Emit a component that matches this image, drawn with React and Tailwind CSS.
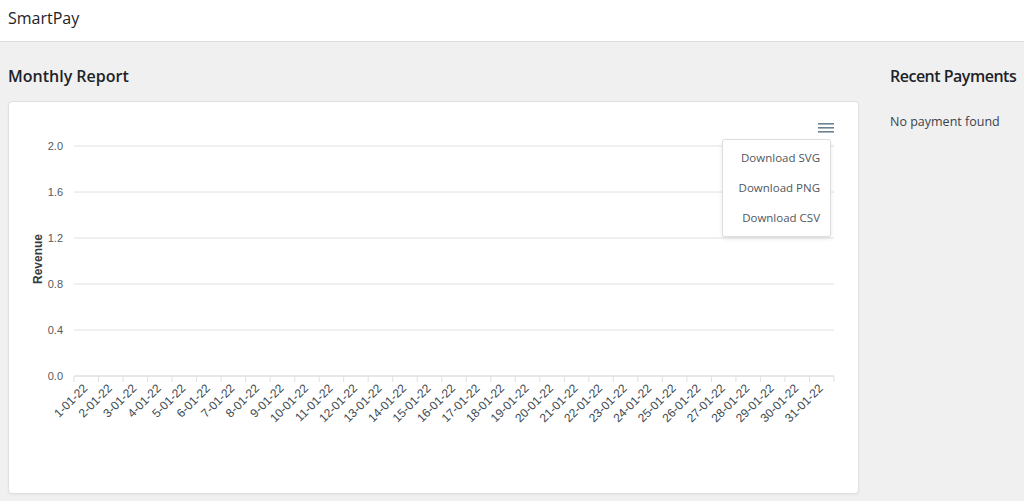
import { useState } from 'react'

const days = Array.from({ length: 31 }, (_, i) => `${i + 1}-01-22`)
const yTicks = ['2.0', '1.6', '1.2', '0.8', '0.4', '0.0']

function RevenueChart() {
  const left = 65
  const right = 825
  const top = 44
  const bottom = 274
  const step = (right - left) / days.length
  const rowGap = (bottom - top) / (yTicks.length - 1)

  return (
    <svg width="851" height="393" className="block" style={{ fontFamily: '"Liberation Sans", Arial, sans-serif' }}>
      {yTicks.map((t, i) => {
        const y = top + i * rowGap
        return (
          <g key={t}>
            <line x1={left} x2={right} y1={y} y2={y} stroke="#e0e0e0" strokeWidth="1" />
            <text x="54" y={y + 4} textAnchor="end" fontSize="11" fill="#555b5e">
              {t}
            </text>
          </g>
        )
      })}
      <line x1={left} x2={right} y1={bottom} y2={bottom} stroke="#e0e0e0" strokeWidth="1" />
      {Array.from({ length: days.length + 1 }, (_, i) => (
        <line key={i} x1={left + i * step} x2={left + i * step} y1={bottom} y2={bottom + 6} stroke="#e0e0e0" />
      ))}
      {days.map((d, i) => {
        const cx = left + (i + 0.5) * step + 2
        const cy = bottom + 13
        return (
          <text
            key={d}
            x={cx}
            y={cy}
            textAnchor="end"
            fontSize="12"
            fill="#3d4a52"
            transform={`rotate(-45 ${cx} ${cy})`}
          >
            {d}
          </text>
        )
      })}
      <text
        x="29"
        y="161"
        textAnchor="middle"
        fontSize="12"
        fontWeight="700"
        fill="#373d3f"
        transform="rotate(-90 29 157)"
      >
        Revenue
      </text>
    </svg>
  )
}

export default function App() {
  const [menuOpen] = useState(true)

  return (
    <div
      className="min-h-[501px] bg-[#f0f0f1] text-[#1d2327]"
      style={{ fontFamily: '"Open Sans", "Noto Sans", sans-serif' }}
    >
      <header className="h-[42px] border-b border-[#dcdcde] bg-white px-2 pt-[6px]">
        <span className="text-[16px] leading-[22px]">SmartPay</span>
      </header>

      <div className="flex gap-[31px] px-2">
        <div className="w-[851px] shrink-0">
          <h2 className="mt-[22px] mb-[13px] text-[16px] font-semibold leading-[24px]">Monthly Report</h2>
          <div className="relative h-[393px] rounded border border-[#e0e0e0] bg-white shadow-[0_1px_2px_rgba(0,0,0,0.05)]">
            <RevenueChart />

            <button className="absolute top-[20px] left-[809px] p-0">
              <svg width="17" height="12" viewBox="0 0 17 12">
                <rect x="0" y="1" width="16" height="1.6" fill="#6e8192" />
                <rect x="0" y="5" width="16" height="1.6" fill="#6e8192" />
                <rect x="0" y="9" width="16" height="1.6" fill="#6e8192" />
              </svg>
            </button>

            {menuOpen && (
              <div className="absolute top-[37px] left-[713px] w-[109px] rounded-[3px] border border-[#ddd] bg-white py-[3px] shadow-[0_2px_4px_rgba(0,0,0,0.08)]">
                {['Download SVG', 'Download PNG', 'Download CSV'].map((item) => (
                  <div key={item} className="flex h-[30px] items-center justify-end px-[10px] text-[11.5px] text-[#50575e]">
                    {item}
                  </div>
                ))}
              </div>
            )}
          </div>
        </div>

        <div className="flex-1">
          <h2 className="mt-[22px] whitespace-nowrap text-[16px] font-semibold leading-[24px] tracking-[-0.5px]">
            Recent Payments
          </h2>
          <p className="mt-[25px] text-[12.5px] text-[#3c434a]">No payment found</p>
        </div>
      </div>
    </div>
  )
}
